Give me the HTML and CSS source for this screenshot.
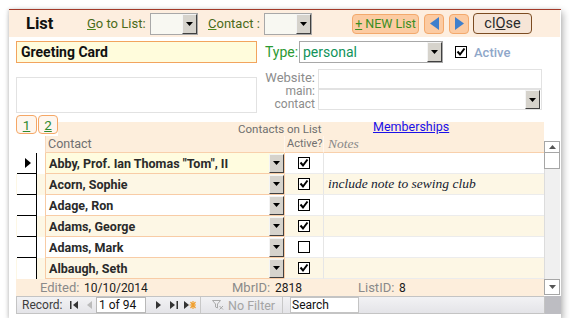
FILE: index.html
```html
<!DOCTYPE html>
<html lang="en">
<head>
    <meta charset="UTF-8">
    <link rel="stylesheet" href="styles.css">
    <title>List</title>
</head>
<body>
<div class="window">
    <!-- ust bant -->
    <div class="header">
        <span class="title">List</span>
        <span class="hlabel goto"><u>G</u>o to List:</span>
        <span class="combo hcombo"><span class="dd"><svg width="7" height="4"><polygon points="0,0 7,0 3.5,4" fill="#000" /></svg></span></span>
        <span class="hlabel contactlbl"><u>C</u>ontact :</span>
        <span class="combo hcombo"><span class="dd"><svg width="7" height="4"><polygon points="0,0 7,0 3.5,4" fill="#000" /></svg></span></span>
        <span class="btn newbtn"><span><u>+</u> NEW List</span></span>
        <span class="btn arrowbtn"><svg width="9" height="13"><polygon points="9,0 9,13 0,6.5" fill="#3f7fcc" /></svg></span>
        <span class="btn arrowbtn"><svg width="9" height="13"><polygon points="0,0 0,13 9,6.5" fill="#3f7fcc" /></svg></span>
        <span class="btn closebtn"><span>cl<u>O</u>se</span></span>
    </div>

    <div class="row-name">
        <div class="namebox">Greeting Card</div>
        <span class="typelbl">Type:</span>
        <span class="combo typecombo">personal<span class="dd"><svg width="7" height="4"><polygon points="0,0 7,0 3.5,4" fill="#000" /></svg></span></span>
        <svg class="chk activechk" width="12" height="12"><rect x="0.5" y="0.5" width="11" height="11" fill="#fff" stroke="#000" /><path d="M2.5 5.5 L5 8.5 L9.5 2.5" stroke="#000" stroke-width="2" fill="none" /></svg>
        <span class="activelbl">Active</span>
    </div>

    <div class="row-web">
        <div class="bigbox"></div>
        <div class="webfields">
            <span class="glbl">Website:</span>
            <div class="webbox"></div>
            <span class="glbl two"><span class="ln">main:</span><span class="ln">contact</span></span>
            <div class="combo maincombo"><span class="dd"><svg width="7" height="4"><polygon points="0,0 7,0 3.5,4" fill="#000" /></svg></span></div>
        </div>
    </div>

    <div class="row-tabs">
        <span class="tab"><u>1</u></span>
        <span class="tab"><u>2</u></span>
        <div class="band">
            <span class="bandtitle">Contacts on List</span>
            <a class="memlink">Memberships</a>
        </div>
    </div>

    <!-- alt form -->
    <div class="subform">
        <div class="gridcol">
            <div class="ghead">
                <span class="hc hc-contact">Contact</span>
                <span class="hc hc-active">Active?</span>
                <span class="hc hc-notes">Notes</span>
            </div>
            <div id="rows"></div>
            <div class="info">
                <span class="ilbl ed">Edited:</span><span class="ival v1">10/10/2014</span>
                <span class="ilbl mbr">MbrID:</span><span class="ival v2">2818</span>
                <span class="ilbl lid">ListID:</span><span class="ival">8</span>
            </div>
        </div>
        <div class="vscroll">
            <div class="sbtn up"><svg width="7" height="4"><polygon points="0,4 7,4 3.5,0" fill="#555" /></svg></div>
            <div class="thumb"></div>
            <div class="track"></div>
            <div class="sbtn down"><svg width="7" height="4"><polygon points="0,0 7,0 3.5,4" fill="#555" /></svg></div>
        </div>
    </div>

    <div class="navrow">
        <div class="navbar">
            <span class="reclbl">Record:</span>
            <svg class="nicon first" width="8" height="8"><rect x="0" y="0" width="1.5" height="8" fill="#333" /><polygon points="8,0 8,8 3,4" fill="#333" /></svg>
            <svg class="nicon prev" width="5" height="8"><polygon points="5,0 5,8 0,4" fill="#bbb" /></svg>
            <span class="recbox">1 of 94</span>
            <svg class="nicon next" width="5" height="8"><polygon points="0,0 0,8 5,4" fill="#333" /></svg>
            <svg class="nicon last" width="8" height="8"><polygon points="0,0 0,8 5,4" fill="#333" /><rect x="6.5" y="0" width="1.5" height="8" fill="#333" /></svg>
            <svg class="nicon newrec" width="12" height="10"><polygon points="0,1 0,9 5,5" fill="#333" /><path d="M9 1 V9 M5.5 5 H12.5 M6.5 2 L11.5 8 M11.5 2 L6.5 8" stroke="#f0a030" stroke-width="1.2" /></svg>
            <span class="nsep"></span>
            <svg class="nicon filter" width="12" height="10"><path d="M0.5 0.5 H8.5 L5.5 4 V8 L3.5 7 V4 Z" fill="none" stroke="#aaa" /><path d="M7.5 6 L11 9.5 M11 6 L7.5 9.5" stroke="#aaa" /></svg>
            <span class="nofilter">No Filter</span>
            <span class="nsep second"></span>
            <span class="searchbox">Search</span>
        </div>
        <div class="corner"></div>
    </div>
</div>

<script>
    var kisiler = [
        { ad: 'Abby, Prof. Ian Thomas "Tom", II', aktif: true, not: '' },
        { ad: 'Acorn, Sophie', aktif: true, not: 'include note to sewing club' },
        { ad: 'Adage, Ron', aktif: true, not: '' },
        { ad: 'Adams, George', aktif: true, not: '' },
        { ad: 'Adams, Mark', aktif: false, not: '' },
        { ad: 'Albaugh, Seth', aktif: true, not: '' }
    ];
    var check = '<svg class="chk" width="12" height="12"><rect x="0.5" y="0.5" width="11" height="11" fill="#fff" stroke="#000" /><path d="M2.5 5.5 L5 8.5 L9.5 2.5" stroke="#000" stroke-width="2" fill="none" /></svg>';
    var bos = '<svg class="chk" width="12" height="12"><rect x="0.5" y="0.5" width="11" height="11" fill="#fff" stroke="#000" /></svg>';
    var dd = '<span class="dd"><svg width="7" height="4"><polygon points="0,0 7,0 3.5,4" fill="#000" /></svg></span>';
    var html = '';
    for (let i = 0; i < kisiler.length; i++) {
        var k = kisiler[i];
        var cls = 'grow' + (i % 2 == 1 ? ' alt' : '') + (i == 0 ? ' current' : '');
        html += '<div class="' + cls + '">' +
            '<span class="sel">' + (i == 0 ? '<svg width="6" height="10"><polygon points="0,0 0,10 6,5" fill="#000" /></svg>' : '') + '</span>' +
            '<span class="pad"></span>' +
            '<span class="cc"><span class="cname">' + k.ad.replace(/"/g, '&quot;') + '</span>' + dd + '</span>' +
            '<span class="ac">' + (k.aktif ? check : bos) + '</span>' +
            '<span class="nc">' + k.not + '</span>' +
            '</div>';
    }
    document.getElementById('rows').innerHTML = html;
</script>
</body>
</html>
```

FILE: styles.css
```css
* {
    box-sizing: border-box;
}

body {
    margin: 0;
    background-color: #fff;
    font-family: Roboto, "Open Sans", sans-serif;
    font-size: 12px;
    color: #1e1e1e;
}

.window {
    margin: 9px 0 0 9px;
    width: 552px;
    height: 309px;
    border-top: 1px solid #a33a2a;
    background-color: #fff;
    box-shadow: 2px 3px 7px rgba(0, 0, 0, 0.3), -1px 0 3px rgba(0, 0, 0, 0.12);
}

/* ust bant */
.header {
    height: 27px;
    width: 551px;
    background-color: #fdeedf;
    display: flex;
    align-items: center;
    white-space: nowrap;
}

.header > * {
    flex: none;
}

.title {
    margin-left: 17px;
    font-size: 16.5px;
    font-weight: bold;
    color: #111;
    width: 61px;
}

.hlabel {
    font-size: 13px;
    color: #4a6a1a;
}

.hlabel u {
    text-decoration-color: #4a8a1a;
}

.goto {
    width: 63px;
}

.contactlbl {
    margin-left: 10px;
    width: 56px;
}

.combo {
    display: flex;
    align-items: center;
    border: 1px solid #a8a8a8;
    background-color: #fff;
}

.hcombo {
    width: 48px;
    height: 22px;
    background-color: #f8f8f2;
    margin-top: 1px;
}

.dd {
    margin-left: auto;
    width: 15px;
    height: 100%;
    flex: none;
    background-color: #d6d3cc;
    border-left: 1px solid #f4f4f4;
    border-top: 1px solid #f4f4f4;
    border-right: 1px solid #404040;
    border-bottom: 1px solid #404040;
    display: flex;
    align-items: center;
    justify-content: center;
}

.btn {
    height: 20px;
    border-radius: 4px;
    display: flex;
    align-items: center;
    justify-content: center;
    font-size: 13.5px;
}

.newbtn {
    margin-left: 40px;
    width: 67px;
    background-color: #fccba2;
    border: 1px solid #f3a96c;
    color: #3a8e22;
    font-size: 12.5px;
}

.arrowbtn {
    margin-left: 5px;
    width: 20px;
    background-color: #fccba2;
    border: 1px solid #f3a96c;
}

.closebtn {
    margin-left: 4px;
    width: 59px;
    height: 21px;
    background-color: #f6e5d7;
    border: 1.5px solid #7c4c22;
    color: #2a2a2a;
    font-size: 14.5px;
}

/* isim satiri */
.row-name {
    margin-top: 4px;
    height: 22px;
    display: flex;
    align-items: center;
    padding-left: 7px;
}

.namebox {
    width: 241px;
    height: 22px;
    border: 1px solid #f2a45e;
    background-color: #fffcdc;
    font-size: 14px;
    font-weight: bold;
    padding-left: 4px;
    line-height: 20px;
    color: #111;
}

.typelbl {
    margin-left: 8px;
    width: 34px;
    color: #2b9a32;
    font-size: 14px;
}

.typecombo {
    width: 144px;
    height: 22px;
    padding-left: 3px;
    font-size: 14px;
    color: #10935a;
}

.activechk {
    margin-left: 12px;
}

.activelbl {
    margin-left: 7px;
    color: #8fa7c9;
    font-size: 13px;
    font-weight: 500;
}

/* web satiri */
.row-web {
    margin-top: 6px;
    height: 44px;
    display: flex;
    padding-left: 7px;
}

.bigbox {
    margin-top: 8px;
    width: 241px;
    height: 36px;
    border: 1px solid #e2e2e2;
}

.webfields {
    display: grid;
    grid-template-columns: 58px 224px;
    grid-template-rows: 20px 21px;
    column-gap: 3px;
}

.glbl {
    text-align: right;
    color: #8c8c8c;
    font-size: 13px;
    line-height: 17px;
}

.glbl.two {
    display: flex;
    flex-direction: column;
    align-items: flex-end;
    margin-top: -4px;
    font-size: 12px;
    line-height: 13px;
}

.webbox {
    border: 1px solid #e2e2e2;
}

.maincombo {
    border: 1px solid #e2e2e2;
    padding: 1px 1px 1px 0;
}

.maincombo .dd {
    height: 19px;
}

/* sekmeler */
.row-tabs {
    margin-top: 2px;
    height: 21px;
    display: flex;
    padding-left: 7px;
}

.tab {
    width: 21px;
    height: 19px;
    border: 1px solid #f5a766;
    border-radius: 4px;
    background-color: #fef6ee;
    color: #2f8a30;
    font-size: 13.5px;
    display: flex;
    justify-content: center;
    align-items: center;
}

.tab + .tab {
    margin-left: 1px;
    width: 20px;
}

.band {
    margin-top: 7px;
    width: 486px;
    height: 14px;
    background-color: #fdeedc;
    display: flex;
    align-items: flex-end;
    padding-left: 180px;
    font-size: 11.5px;
    line-height: 14px;
    white-space: nowrap;
}

.bandtitle {
    width: 135px;
    color: #6e6e6e;
}

.memlink {
    color: #1a10e8;
    text-decoration: underline;
    font-size: 12.5px;
    position: relative;
    top: -2px;
}

/* alt form */
.subform {
    display: flex;
    padding-left: 7px;
    height: 160px;
}

.gridcol {
    width: 528px;
}

.ghead {
    height: 17px;
    display: flex;
    padding-left: 29px;
}

.hc {
    height: 17px;
    background-color: #fdeedc;
    border-bottom: 1px solid #f8d0ac;
    color: #707070;
    font-size: 12.5px;
    line-height: 16px;
    padding-left: 2px;
    white-space: nowrap;
    overflow: hidden;
}

.hc-contact {
    width: 239px;
    border-left: 1px solid #f8d9bd;
}

.hc-active {
    width: 39px;
    border-left: 1px solid #fff6ee;
    padding-left: 2px;
    font-size: 11px;
}

.hc-notes {
    flex: 1;
    border-left: 1px solid #fff6ee;
    font-family: "Liberation Serif", "DejaVu Serif", serif;
    font-style: italic;
    font-size: 13.5px;
    color: #888;
    padding-left: 4px;
}

.grow {
    height: 21px;
    display: flex;
    background-color: #fff;
}

.grow.alt {
    background-color: #fdf7e5;
}

.sel {
    margin-left: 1px;
    width: 20px;
    border-right: 1px solid #000;
    border-bottom: 1px solid #000;
    background-color: #fff;
    display: flex;
    align-items: center;
    padding-left: 8px;
}

.grow:last-child .sel {
    border-bottom: none;
}

.pad {
    width: 8px;
}

.cc {
    width: 239px;
    border-left: 1px solid #f8cca6;
    border-bottom: 1px solid #f8cca6;
    display: flex;
    align-items: center;
    padding-left: 3px;
    font-size: 12.5px;
    font-weight: bold;
    color: #2a2a2a;
    white-space: nowrap;
}

.current .cc {
    background-color: #fffcdf;
}

.cc .dd {
    height: 19px;
}

.ac {
    width: 39px;
    border-left: 1px solid #f8cca6;
    border-bottom: 1px solid #ececec;
    display: flex;
    align-items: center;
    justify-content: center;
}

.nc {
    flex: 1;
    border-left: 1px solid #e6e6e6;
    border-bottom: 1px solid #ececec;
    font-family: "Liberation Serif", "DejaVu Serif", serif;
    font-style: italic;
    font-size: 13.5px;
    color: #141a30;
    padding-left: 4px;
    line-height: 20px;
    white-space: nowrap;
}

.info {
    height: 17px;
    background-color: #fdeedc;
    display: flex;
    align-items: center;
    font-size: 13px;
    white-space: nowrap;
}

.ilbl {
    color: #8a8a8a;
}

.ed {
    margin-left: 24px;
    width: 44px;
}

.v1 {
    width: 148px;
}

.mbr {
    width: 43px;
}

.v2 {
    width: 83px;
}

.lid {
    width: 41px;
}

.ival {
    color: #1a1a1a;
    font-size: 12px;
}

.vscroll {
    width: 16px;
    display: flex;
    flex-direction: column;
    padding-top: 5px;
}

.sbtn {
    height: 12px;
    background-color: #fff;
    border: 1px solid #a6a6a6;
    display: flex;
    align-items: center;
    justify-content: center;
}

.thumb {
    height: 16px;
    background-color: #fff;
    border: 1px solid #a6a6a6;
    border-top: none;
}

.track {
    flex: 1;
    background-color: #f0f0f0;
    border-left: 1px solid #dcdcdc;
}

.sbtn.down {
    height: 16px;
    margin-bottom: 1px;
}

/* kayit cubugu */
.navrow {
    display: flex;
    padding-left: 7px;
    height: 18px;
}

.navbar {
    width: 529px;
    border: 1px solid #c4c4c4;
    background: linear-gradient(#f2f2f4, #e4e4e8);
    display: flex;
    align-items: center;
    font-size: 12px;
    color: #3c3c3c;
    white-space: nowrap;
}

.navbar > * {
    flex: none;
}

.reclbl {
    margin-left: 5px;
    width: 48px;
}

.nicon.prev {
    margin-left: 9px;
}

.recbox {
    margin-left: 4px;
    width: 50px;
    height: 16px;
    background-color: #fff;
    border: 1px solid #b8b8b8;
    padding-left: 2px;
    line-height: 14px;
    font-size: 12px;
    color: #111;
}

.nicon.next {
    margin-left: 10px;
}

.nicon.last {
    margin-left: 9px;
}

.nicon.newrec {
    margin-left: 6px;
}

.nsep {
    margin-left: 4px;
    width: 1px;
    height: 16px;
    background-color: #c8c8c8;
}

.nicon.filter {
    margin-left: 11px;
}

.nofilter {
    margin-left: 4px;
    width: 50px;
    color: #a4a4a4;
    font-size: 12.5px;
}

.nsep.second {
    margin-left: 4px;
}

.searchbox {
    margin-left: 7px;
    width: 69px;
    height: 16px;
    background-color: #fff;
    border: 1px solid #c4c4c4;
    line-height: 14px;
    padding-left: 1px;
    color: #111;
}

.corner {
    width: 16px;
    background-color: #bdbdc2;
}
```
